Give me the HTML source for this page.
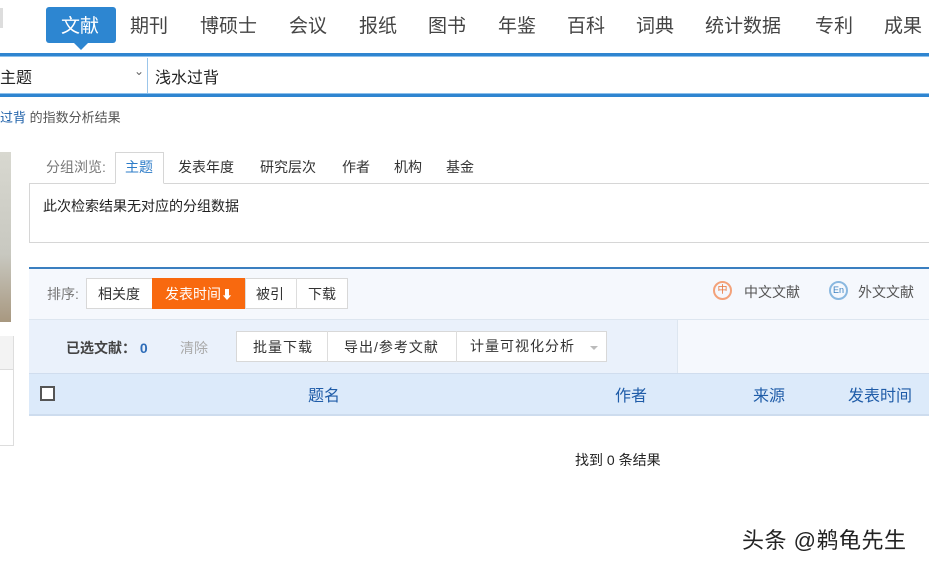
<!DOCTYPE html>
<html><head><meta charset="utf-8"><style>
*{margin:0;padding:0;box-sizing:border-box}
body{width:929px;height:567px;overflow:hidden;background:#fff;font-family:"Liberation Sans","Microsoft YaHei","Noto Sans CJK SC",sans-serif;color:#333;position:relative}
.a{position:absolute;white-space:nowrap}
.nav{font-size:19px;color:#444;top:11px}
</style></head><body>
<div class="a" style="left:0;top:8px;width:3px;height:20px;background:#ddd"></div>
<div class="a" style="left:46px;top:7px;width:70px;height:36px;background:#2d86d1;border-radius:3px"></div>
<div class="a" style="left:74px;top:43px;border-left:7px solid transparent;border-right:7px solid transparent;border-top:7px solid #2d86d1;width:0;height:0"></div>
<div class="a nav" style="left:61px;color:#fff">文献</div>
<div class="a nav" style="left:130px">期刊</div>
<div class="a nav" style="left:200px">博硕士</div>
<div class="a nav" style="left:289px">会议</div>
<div class="a nav" style="left:359px">报纸</div>
<div class="a nav" style="left:428px">图书</div>
<div class="a nav" style="left:498px">年鉴</div>
<div class="a nav" style="left:567px">百科</div>
<div class="a nav" style="left:636px">词典</div>
<div class="a nav" style="left:705px">统计数据</div>
<div class="a nav" style="left:815px">专利</div>
<div class="a nav" style="left:884px">成果</div>
<div class="a" style="left:0;top:53px;width:929px;height:4px;background:#2f85d0;border-bottom:1px solid #8cc0ec"></div>
<div class="a" style="left:0;top:93px;width:929px;height:4px;background:#2f85d0;border-top:1px solid #8cc0ec"></div>
<div class="a" style="left:147px;top:58px;width:1px;height:35px;background:#9cc6ea"></div>
<div class="a" style="left:0;top:64px;font-size:16px;color:#222">主题</div>
<div class="a" style="left:134px;top:64px;font-size:12px;color:#666">⌄</div>
<div class="a" style="left:155px;top:64px;font-size:16px;color:#222">浅水过背</div>
<div class="a" style="left:0;top:107px;font-size:13px;color:#555"><span style="color:#1c5fa8">过背</span> 的指数分析结果</div>
<div class="a" style="left:0;top:152px;width:11px;height:170px;background:linear-gradient(#d8d8d0,#c8c8c0 60%,#a89880)"></div>
<div class="a" style="left:0;top:336px;width:14px;height:110px;border:1px solid #ddd;border-left:none"></div>
<div class="a" style="left:0;top:336px;width:13px;height:34px;background:#f3f3f3;border-bottom:1px solid #ddd"></div>
<div class="a" style="left:46px;top:157px;font-size:14px;color:#777">分组浏览:</div>
<div class="a" style="left:29px;top:183px;width:900px;height:60px;border:1px solid #d6d6d6;border-right:none"></div>
<div class="a" style="left:115px;top:152px;width:49px;height:32px;border:1px solid #d6d6d6;border-bottom:1px solid #fff;background:#fff"></div>
<div class="a" style="left:125px;top:157px;font-size:14px;color:#2d7cc8">主题</div>
<div class="a" style="left:178px;top:157px;font-size:14px">发表年度</div>
<div class="a" style="left:260px;top:157px;font-size:14px">研究层次</div>
<div class="a" style="left:342px;top:157px;font-size:14px">作者</div>
<div class="a" style="left:394px;top:157px;font-size:14px">机构</div>
<div class="a" style="left:446px;top:157px;font-size:14px">基金</div>
<div class="a" style="left:43px;top:196px;font-size:14px;color:#222">此次检索结果无对应的分组数据</div>
<div class="a" style="left:29px;top:267px;width:900px;height:53px;background:#f5f8fd;border-top:2px solid #3a7fc0;border-bottom:1px solid #dde6f0"></div>
<div class="a" style="left:47px;top:284px;font-size:14px;color:#777">排序:</div>
<div class="a" style="left:86px;top:278px;width:262px;height:31px;border:1px solid #d8d8d8;background:#fff"></div>
<div class="a" style="left:152px;top:278px;width:93px;height:31px;background:#f8690f"></div>
<div class="a" style="left:245px;top:278px;width:1px;height:31px;background:#ddd"></div>
<div class="a" style="left:296px;top:278px;width:1px;height:31px;background:#ddd"></div>
<div class="a" style="left:98px;top:284px;font-size:14px">相关度</div>
<div class="a" style="left:165px;top:284px;font-size:14px;color:#fff">发表时间<span style="font-size:12px">⬇</span></div>
<div class="a" style="left:256px;top:284px;font-size:14px">被引</div>
<div class="a" style="left:308px;top:284px;font-size:14px">下载</div>
<div class="a" style="left:713px;top:281px;width:19px;height:19px;border:2px solid #f3a27a;border-radius:50%;font-size:10px;color:#e8753b;text-align:center;line-height:15px">中</div>
<div class="a" style="left:744px;top:282px;font-size:14px;color:#555">中文文献</div>
<div class="a" style="left:829px;top:281px;width:19px;height:19px;border:2px solid #8ab8e0;border-radius:50%;font-size:9px;color:#3a80c0;text-align:center;line-height:15px">En</div>
<div class="a" style="left:858px;top:282px;font-size:14px;color:#555">外文文献</div>
<div class="a" style="left:29px;top:320px;width:648px;height:53px;background:#eaf1fb"></div>
<div class="a" style="left:677px;top:320px;width:252px;height:53px;background:#f5f8fd;border-left:1px solid #dde6f0"></div>
<div class="a" style="left:66px;top:338px;font-size:14px;font-weight:bold;color:#444">已选文献： <span style="color:#2d6cb8">0</span></div>
<div class="a" style="left:180px;top:338px;font-size:14px;color:#aaa">清除</div>
<div class="a" style="left:236px;top:331px;width:371px;height:31px;border:1px solid #d8d8d8;background:#fff"></div>
<div class="a" style="left:327px;top:331px;width:1px;height:31px;background:#ddd"></div>
<div class="a" style="left:456px;top:331px;width:1px;height:31px;background:#ddd"></div>
<div class="a" style="left:253px;top:337px;font-size:14px;letter-spacing:1px">批量下载</div>
<div class="a" style="left:344px;top:337px;font-size:14px;letter-spacing:1px">导出/参考文献</div>
<div class="a" style="left:470px;top:336px;font-size:14px;letter-spacing:1px">计量可视化分析</div>
<div class="a" style="left:590px;top:346px;border-left:4px solid transparent;border-right:4px solid transparent;border-top:4px solid #bbb"></div>
<div class="a" style="left:29px;top:373px;width:900px;height:43px;background:#dceafa;border-bottom:2px solid #cddcee;border-top:1px solid #d0ddee"></div>
<div class="a" style="left:40px;top:386px;width:15px;height:15px;border:2px solid #555;background:#fff"></div>
<div class="a" style="left:308px;top:382px;font-size:16px;color:#1f5ca8">题名</div>
<div class="a" style="left:615px;top:382px;font-size:16px;color:#1f5ca8">作者</div>
<div class="a" style="left:753px;top:382px;font-size:16px;color:#1f5ca8">来源</div>
<div class="a" style="left:848px;top:382px;font-size:16px;color:#1f5ca8">发表时间</div>
<div class="a" style="left:575px;top:450px;font-size:14px;color:#222">找到 0 条结果</div>
<div class="a" style="left:742px;top:523px;font-size:22px;letter-spacing:0.5px;color:#222;text-shadow:0 0 2px #fff">头条 @鹈龟先生</div>
</body></html>
